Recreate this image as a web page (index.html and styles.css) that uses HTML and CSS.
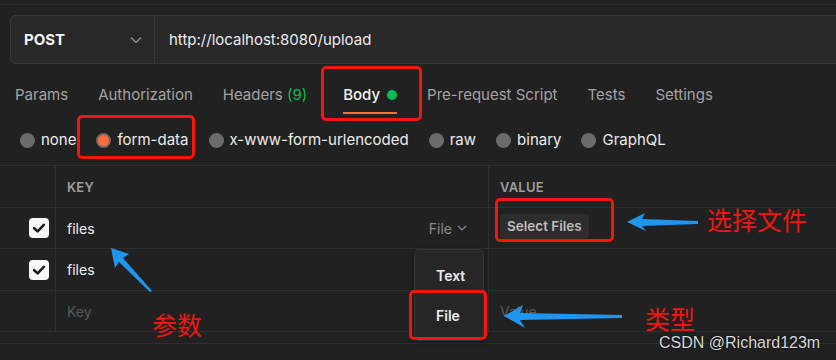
FILE: index.html
```html
<!DOCTYPE html>
<html lang="en">
<head>
    <meta charset="UTF-8">
    <title>Postman - form-data upload</title>
    <link rel="stylesheet" href="styles.css">
</head>
<body>
    <div class="topline"></div>

    <div class="request-bar">
        <div class="method">
            <span>POST</span>
            <svg class="chevron" width="12" height="8" viewBox="0 0 12 8"><path d="M1 1.5 L6 6.5 L11 1.5" fill="none" stroke="#8c8c8c" stroke-width="1.3"/></svg>
        </div>
        <div class="url">http://localhost:8080/upload</div>
    </div>

    <nav class="tabs">
        <span class="tab">Params</span>
        <span class="tab">Authorization</span>
        <span class="tab">Headers <em class="count">(9)</em></span>
        <span class="tab active">Body <i class="status-dot"></i></span>
        <span class="tab">Pre-request Script</span>
        <span class="tab">Tests</span>
        <span class="tab">Settings</span>
    </nav>

    <div class="body-types">
        <label class="radio"><span class="circle"></span>none</label>
        <label class="radio checked"><span class="circle"></span>form-data</label>
        <label class="radio"><span class="circle"></span>x-www-form-urlencoded</label>
        <label class="radio"><span class="circle"></span>raw</label>
        <label class="radio"><span class="circle"></span>binary</label>
        <label class="radio"><span class="circle"></span>GraphQL</label>
    </div>

    <div class="kv-table">
        <div class="kv-row kv-head">
            <div class="cell check"></div>
            <div class="cell key">KEY</div>
            <div class="cell value">VALUE</div>
        </div>
        <div class="kv-row">
            <div class="cell check"><span class="checkbox"><svg width="20" height="20" viewBox="0 0 20 20"><path d="M5.2 10.2 L8.6 13.4 L14.8 6.8" fill="none" stroke="#1e1e1e" stroke-width="2.6" stroke-linecap="round" stroke-linejoin="round"/></svg></span></div>
            <div class="cell key">
                <span>files</span>
                <span class="type-select">File <svg width="10" height="6" viewBox="0 0 10 6"><path d="M1 1 L5 5 L9 1" fill="none" stroke="#8a8a8a" stroke-width="1.2"/></svg></span>
            </div>
            <div class="cell value"><span class="select-files">Select Files</span></div>
        </div>
        <div class="kv-row tall">
            <div class="cell check"><span class="checkbox"><svg width="20" height="20" viewBox="0 0 20 20"><path d="M5.2 10.2 L8.6 13.4 L14.8 6.8" fill="none" stroke="#1e1e1e" stroke-width="2.6" stroke-linecap="round" stroke-linejoin="round"/></svg></span></div>
            <div class="cell key"><span>files</span></div>
            <div class="cell value"></div>
        </div>
        <div class="kv-row">
            <div class="cell check"></div>
            <div class="cell key placeholder">Key</div>
            <div class="cell value placeholder">Value</div>
        </div>
    </div>

    <div class="response-bar">Response</div>

    <!-- type dropdown, open over the table -->
    <div class="type-menu">
        <div class="menu-item">Text</div>
        <div class="menu-item">File</div>
    </div>

    <!-- screenshot annotations -->
    <div class="mark mark-body"></div>
    <div class="mark mark-formdata"></div>
    <div class="mark mark-select"></div>
    <div class="mark mark-file"></div>

    <svg class="arrows" width="836" height="360" viewBox="0 0 836 360">
        <polygon points="111,248 129,254 123,258 152,291 150,292 119,262 115,268" fill="#1e96f0"/>
        <polygon points="627,222 645,213 642,219 698,221 698,224 642,226 646,231" fill="#1e96f0"/>
        <polygon points="504,316 523,305 520,313 622,315 622,318 520,320 525,328" fill="#1e96f0"/>
    </svg>

    <span class="note note-params">参数</span>
    <span class="note note-select">选择文件</span>
    <span class="note note-type">类型</span>

    <span class="watermark">CSDN @Richard123m</span>
</body>
</html>
```

FILE: styles.css
```css
body {
    margin: 0;
    width: 836px;
    height: 360px;
    overflow: hidden;
    position: relative;
    background: #212121;
    font-family: 'Inter', 'Noto Sans', sans-serif;
    color: #e8e8e8;
}

.topline {
    height: 4px;
    border-bottom: 1px solid #303030;
}

.request-bar {
    display: flex;
    height: 47px;
    margin: 10px -20px 0 10px;
    background: #282828;
    border: 1px solid #383838;
    border-radius: 5px;
}

.method {
    width: 118px;
    padding: 0 12px 0 13px;
    display: flex;
    align-items: center;
    justify-content: space-between;
    border-right: 1px solid #383838;
    font-weight: 700;
    font-size: 15px;
    color: #f5f5f5;
}

.url {
    display: flex;
    align-items: center;
    padding-left: 14px;
    font-size: 15px;
    color: #ececec;
}

.tabs {
    display: flex;
    gap: 30px;
    padding: 21px 0 0 15px;
}

.tab {
    font-size: 15px;
    line-height: 20px;
    color: #a3a3a3;
    padding-bottom: 7px;
    border-bottom: 2px solid transparent;
}

.tab .count {
    font-style: normal;
    color: #0cbb52;
}

.tab.active {
    color: #f5f5f5;
    font-weight: 500;
    border-bottom-color: #ff6c37;
    margin-left: 6px;
}

.status-dot {
    display: inline-block;
    width: 10px;
    height: 10px;
    border-radius: 50%;
    background: #0cbb52;
    margin-left: 3px;
    vertical-align: 0;
}

.body-types {
    display: flex;
    gap: 20px;
    padding-left: 20px;
    margin-top: 16px;
}

.radio {
    display: flex;
    align-items: center;
    gap: 6px;
    font-size: 15px;
    line-height: 20px;
    color: #ececec;
}

.radio .circle {
    width: 15px;
    height: 15px;
    border-radius: 50%;
    background: #6b6b6b;
    box-sizing: border-box;
}

.radio.checked .circle {
    background: #ff6c37;
    border: 2.5px solid #6b6b6b;
}

.kv-table {
    margin-top: 15px;
    border-top: 1px solid #2f2f2f;
}

.kv-row {
    display: grid;
    grid-template-columns: 55px 433px 1fr;
    height: 40px;
    border-bottom: 1px solid #2f2f2f;
}

.kv-head,
.kv-row.tall {
    height: 41px;
}

.cell {
    display: flex;
    align-items: center;
    font-size: 14px;
    color: #f0f0f0;
}

.cell.key,
.cell.value {
    border-left: 1px solid #2f2f2f;
    padding-left: 11px;
}

.cell.key {
    justify-content: space-between;
    padding-right: 21px;
}

.kv-head .cell {
    font-size: 13px;
    font-weight: 600;
    color: #9d9d9d;
    letter-spacing: 0.2px;
}

.cell.check {
    justify-content: flex-end;
    padding-right: 6px;
}

.checkbox {
    width: 20px;
    height: 20px;
    border-radius: 4px;
    background: #f7f7f7;
    display: block;
}

.checkbox svg {
    display: block;
}

.type-select {
    color: #8a8a8a;
    display: flex;
    align-items: center;
    gap: 5px;
}

.select-files {
    background: #2d2d2d;
    border-radius: 4px;
    padding: 4px 7px;
    margin-bottom: 4px;
    font-size: 13.5px;
    font-weight: 600;
    color: #bdbdbd;
    line-height: 17px;
}

.placeholder {
    color: #5a5a5a;
}

.response-bar {
    margin-top: 11px;
    border-top: 1px solid #2f2f2f;
    padding: 13px 0 0 12px;
    font-size: 14px;
    color: #8a8a8a;
}

.type-menu {
    position: absolute;
    left: 414px;
    top: 249px;
    width: 70px;
    height: 92px;
    box-sizing: border-box;
    padding-top: 6px;
    background: #262626;
    border: 1px solid #363636;
    border-radius: 5px;
    box-shadow: 0 2px 6px rgba(0, 0, 0, 0.4);
}

.menu-item {
    height: 40px;
    line-height: 40px;
    padding-left: 21px;
    font-size: 14px;
    font-weight: 600;
    color: #ededed;
}

.mark {
    position: absolute;
    border: 3px solid #f5150f;
    border-radius: 5px;
    box-sizing: border-box;
}

.mark-body {
    left: 321px;
    top: 66px;
    width: 101px;
    height: 55px;
}

.mark-formdata {
    left: 77px;
    top: 115px;
    width: 118px;
    height: 44px;
}

.mark-select {
    left: 495px;
    top: 198px;
    width: 119px;
    height: 44px;
}

.mark-file {
    left: 409px;
    top: 290px;
    width: 78px;
    height: 50px;
}

.arrows {
    position: absolute;
    left: 0;
    top: 0;
}

.note {
    position: absolute;
    font-family: 'Noto Sans CJK SC', sans-serif;
    font-size: 25px;
    line-height: 30px;
    color: #f5150f;
    font-weight: 400;
}

.note-params {
    left: 152px;
    top: 309px;
}

.note-select {
    left: 707px;
    top: 204px;
}

.note-type {
    left: 645px;
    top: 303px;
}

.watermark {
    position: absolute;
    left: 659px;
    top: 334px;
    font-family: 'Liberation Sans', Arial, sans-serif;
    font-size: 16px;
    color: #d6d6d6;
    text-shadow: 0 0 2px #000;
}
```
